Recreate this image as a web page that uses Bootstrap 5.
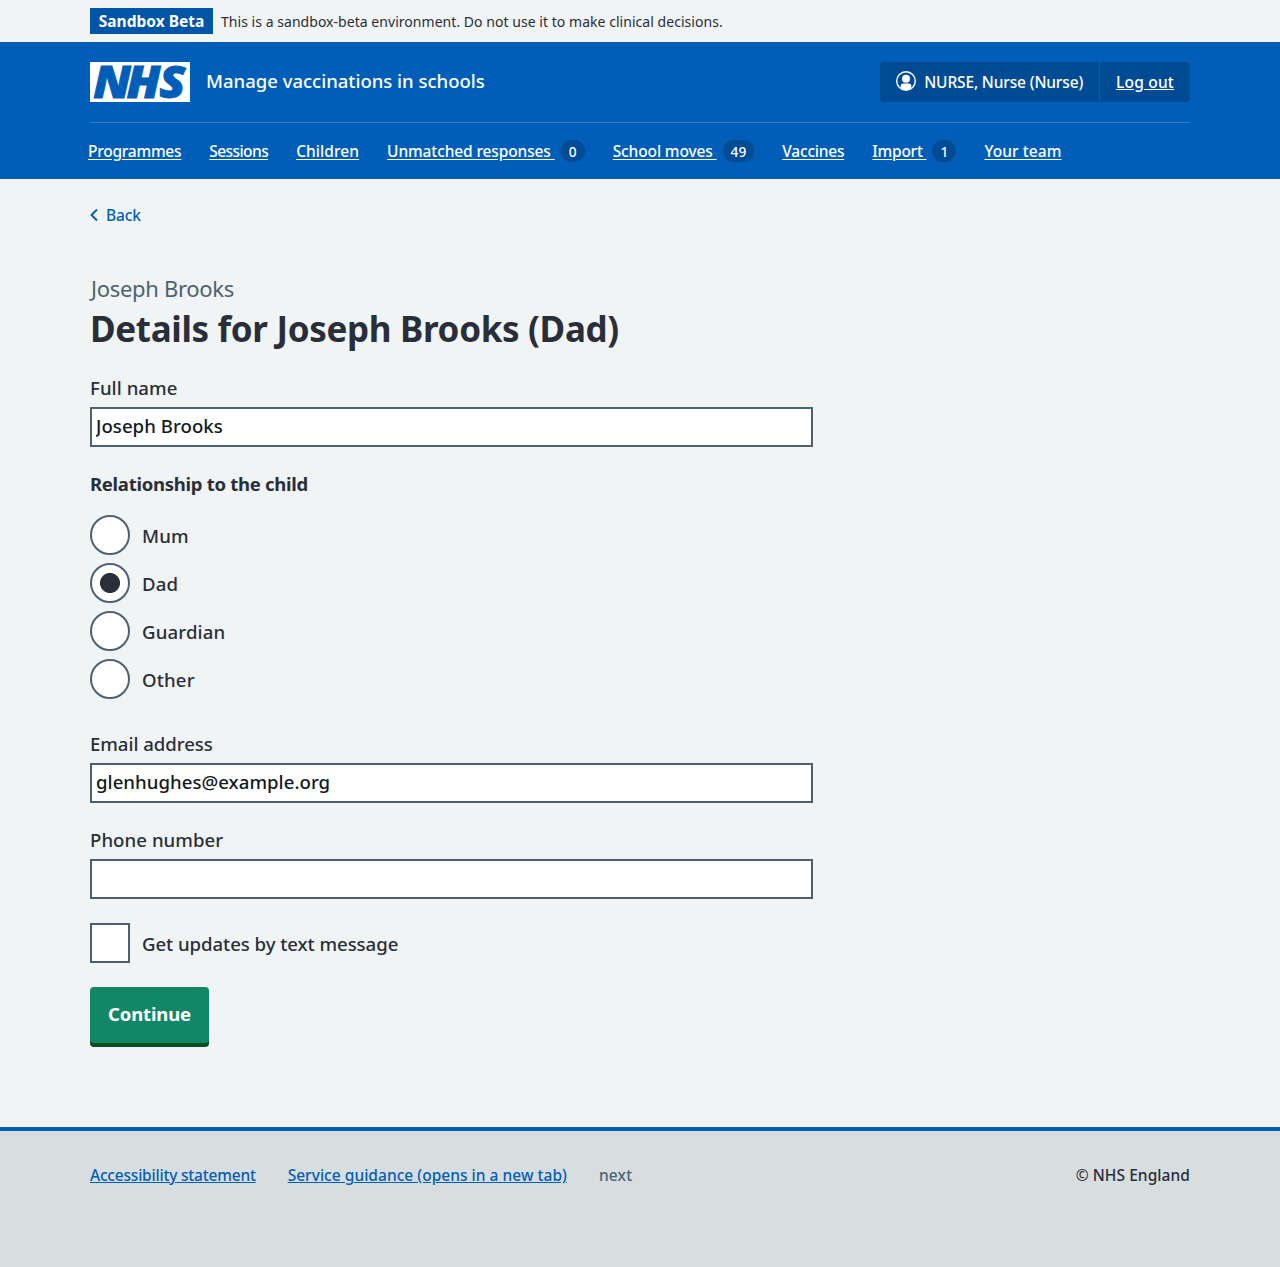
<!DOCTYPE html>
<html lang="en">
<head>
<meta charset="utf-8">
<meta name="viewport" content="width=device-width, initial-scale=1">
<title>Details for Joseph Brooks (Dad) – Manage vaccinations in schools</title>
<link href="https://cdn.jsdelivr.net/npm/bootstrap@5.3.0/dist/css/bootstrap.min.css" rel="stylesheet">
<script src="https://cdn.jsdelivr.net/npm/bootstrap@5.3.0/dist/js/bootstrap.bundle.min.js"></script>
<style>
  :root { --nhs-blue: #005eb8; --nhs-ink: #292e39; --nhs-grey: #4c6272; }
  body { font: 500 15.5px/24px "Noto Sans", sans-serif; color: var(--nhs-ink); background: #f0f4f5; }
  a { color: var(--nhs-blue); }
  .page-width { width: 1100px; margin-inline: auto; }

  .env-bar { height: 42px; font-size: 14px; letter-spacing: .04px; font-weight: 450; }
  .env-bar span { padding-top: 2px; }
  .env-tag { height: 26px; width: 123px; text-align: center; background: #0055a6; color: #fff; font-size: 15.5px; font-weight: 700; line-height: 26px; letter-spacing: 0; }

  .site-header { height: 137px; background: var(--nhs-blue); color: #fff; }
  .site-header a { color: #fff; }
  .header-top { height: 81px; border-bottom: 1px solid #337ec6; }
  .service-name { font-size: 18.5px; margin-bottom: 2px; }
  .account { height: 40px; background: #004b93; border-radius: 4px; }
  .account-item { padding: 0 16px; height: 40px; line-height: 40px; }
  .account-item + .account-item { border-left: 1px solid #005eb8; }
  .account-name { letter-spacing: -.15px; }
  .account-icon { margin-top: -2px; }
  .site-nav { gap: 28px; margin-left: -2px; height: 56px; }
  .site-nav a { white-space: pre; text-underline-offset: 2px; }
  .wide-1 { letter-spacing: .07px; }
  .wide-2 { letter-spacing: .2px; }
  .tight-1 { letter-spacing: -.12px; }
  .tight-2 { letter-spacing: -.2px; }
  .tight-3 { letter-spacing: -.24px; }
  .tight-4 { letter-spacing: -.57px; }
  .count { min-width: 24px; height: 22px; margin-left: 6px; padding: 0 8px; border-radius: 12px; background: #004b93; font-size: 13.7px; line-height: 24px; text-align: center; }

  .back-link { padding-top: 24px; height: 94px; }
  .caption-text { font-size: 22px; line-height: 30px; font-weight: 400; letter-spacing: -.3px; color: var(--nhs-grey); padding-left: 1px; }
  .page-title { font-size: 35px; line-height: 44px; font-weight: 700; letter-spacing: -.33px; margin: 4px 0 23px; }
  .form-main { width: 723px; font-size: 18.6px; line-height: 28px; letter-spacing: .06px; }
  .form-main .form-label { display: block; margin: 0 0 5px; }
  .form-main .form-control { height: 40px; border: 2px solid var(--nhs-grey); border-radius: 0; padding: 0 4px 3px; font-size: 18.6px; font-weight: 500; color: #10191d; letter-spacing: .04px; background: #fff; }
  .block-gap { margin-bottom: 23px; }
  .form-main legend { font-size: 18.5px; line-height: 28px; font-weight: 700; letter-spacing: -.28px; margin: 0 0 17px; float: none; }
  .choice { display: flex; gap: 12px; height: 40px; line-height: 42px; margin-bottom: 8px; }
  .choice .form-check-input { width: 40px; height: 40px; margin: 0; border: 2px solid var(--nhs-grey); background-color: #fff; border-radius: 0; flex: none; }
  .choice .form-check-input[type=radio] { border-radius: 50%; }
  .choice .form-check-input[type=radio]:checked { background-image: radial-gradient(circle, var(--nhs-ink) 9.6px, #fff 10.4px); }
  .choice label { letter-spacing: .15px; }
  .choice.sms-choice { margin: 24px 0; }
  .sms-choice label, .label-email { letter-spacing: -.05px; }
  .btn-continue, .btn-continue:hover { width: 119px; height: 56px; background: #128766; color: #fff; border: 0; border-radius: 4px; box-shadow: 0 4px 0 #00501f; font-size: 18.5px; font-weight: 700; padding: 0 0 2px; letter-spacing: -.13px; }

  .site-footer { margin-top: 84px; height: 140px; border-top: 4px solid var(--nhs-blue); background: #d8dde0; padding-top: 32px; }
  .site-footer ul { gap: 32px; }
  .footer-guidance { letter-spacing: .03px; }
  .footer-next { color: var(--nhs-grey); }
</style>
</head>
<body>
<div class="page-width env-bar d-flex align-items-center gap-2">
  <strong class="env-tag">Sandbox Beta</strong>
  <span>This is a sandbox-beta environment. Do not use it to make clinical decisions.</span>
</div>

<header class="site-header">
  <div class="page-width">
    <div class="header-top d-flex align-items-center justify-content-between">
      <div class="d-flex align-items-center gap-3">
        <svg width="100" height="40" viewBox="0 0 100 40" overflow="visible" role="img" aria-label="NHS">
          <rect width="100" height="40" fill="#fff"/>
          <text transform="scale(1.07 1)" x="3 34.200 64.800" y="36" font-family="Noto Sans" font-size="44.500" font-weight="900" font-style="italic" fill="#005eb8" stroke="#005eb8" stroke-width=".9">NHS</text>
        </svg>
        <span class="service-name">Manage vaccinations in schools</span>
      </div>
      <div class="account d-flex">
        <div class="account-item d-flex align-items-center gap-2">
          <svg width="20" height="20" viewBox="0 0 20 20" aria-hidden="true" class="account-icon">
            <circle cx="10" cy="10" r="9.300" fill="none" stroke="#fff" stroke-width="1.400"/>
            <circle cx="10" cy="7.700" r="4" fill="#fff"/>
            <path d="M4.700 16.800V15q0-2.500 2.500-2.500h5.600q2.500 0 2.500 2.500v1.800Q10 21.500 4.700 16.800Z" fill="#fff"/>
          </svg>
          <span class="account-name">NURSE, Nurse (Nurse)</span>
        </div>
        <div class="account-item"><a href="#" class="wide-2">Log out</a></div>
      </div>
    </div>
    <nav class="site-nav d-flex align-items-center">
      <a href="#" class="tight-3">Programmes</a>
      <a href="#" class="tight-4">Sessions</a>
      <a href="#" class="wide-1">Children</a>
      <div class="d-flex align-items-center"><a href="#" class="tight-1">Unmatched responses </a><span class="count">0</span></div>
      <div class="d-flex align-items-center"><a href="#" class="tight-1">School moves </a><span class="count">49</span></div>
      <a href="#" class="tight-2">Vaccines</a>
      <div class="d-flex align-items-center"><a href="#" class="tight-3">Import </a><span class="count">1</span></div>
      <a href="#" class="wide-1">Your team</a>
    </nav>
  </div>
</header>

<main class="page-width">
  <div class="back-link">
    <a href="#" class="d-inline-flex align-items-center gap-2 text-decoration-none tight-1">
      <svg width="8" height="14" viewBox="0 0 8 14" fill="none" stroke="currentColor" stroke-width="2" aria-hidden="true"><path d="M7 1.500 1.500 7 7 12.500"/></svg>Back</a>
  </div>
  <div class="caption-text">Joseph Brooks</div>
  <h1 class="page-title">Details for Joseph Brooks (Dad)</h1>
  <form class="form-main">
    <div class="block-gap">
      <label class="form-label" for="name">Full name</label>
      <input class="form-control" id="name" type="text" value="Joseph Brooks">
    </div>
    <fieldset class="block-gap">
      <legend>Relationship to the child</legend>
      <div class="choice"><input class="form-check-input" type="radio" name="rel" id="mum"><label for="mum">Mum</label></div>
      <div class="choice"><input class="form-check-input" type="radio" name="rel" id="dad" checked><label for="dad">Dad</label></div>
      <div class="choice"><input class="form-check-input" type="radio" name="rel" id="guardian"><label for="guardian">Guardian</label></div>
      <div class="choice"><input class="form-check-input" type="radio" name="rel" id="other"><label for="other">Other</label></div>
    </fieldset>
    <div class="block-gap">
      <label class="form-label label-email" for="email">Email address</label>
      <input class="form-control" id="email" type="text" value="glenhughes@example.org">
    </div>
    <div>
      <label class="form-label" for="phone">Phone number</label>
      <input class="form-control" id="phone" type="text">
    </div>
    <div class="choice sms-choice"><input class="form-check-input" type="checkbox" id="sms"><label for="sms">Get updates by text message</label></div>
    <button type="button" class="btn btn-continue d-block">Continue</button>
  </form>
</main>

<footer class="site-footer">
  <div class="page-width d-flex justify-content-between">
    <ul class="list-unstyled d-flex mb-0">
      <li><a href="#" class="tight-2">Accessibility statement</a></li>
      <li><a href="#" class="footer-guidance">Service guidance (opens in a new tab)</a></li>
      <li class="footer-next wide-2">next</li>
    </ul>
    <span class="wide-1">© NHS England</span>
  </div>
</footer>
</body>
</html>
